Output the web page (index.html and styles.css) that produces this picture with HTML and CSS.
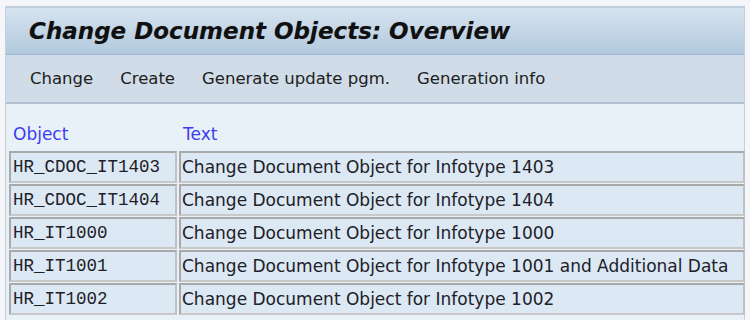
FILE: index.html
```html
<!DOCTYPE html>
<html>
<head>
<meta charset="utf-8">
<link rel="stylesheet" href="styles.css">
</head>
<body>
<div class="screen">
  <div class="title-bar"><h1 class="title">Change Document Objects: Overview</h1></div>
  <div class="toolbar">
    <span class="tool">Change</span>
    <span class="tool">Create</span>
    <span class="tool">Generate update pgm.</span>
    <span class="tool">Generation info</span>
  </div>
  <div class="content">
    <div class="grid">
      <div class="head">Object</div><div class="head">Text</div>
      <div class="cell obj">HR_CDOC_IT1403</div><div class="cell txt">Change Document Object for Infotype 1403</div>
      <div class="cell obj">HR_CDOC_IT1404</div><div class="cell txt">Change Document Object for Infotype 1404</div>
      <div class="cell obj">HR_IT1000</div><div class="cell txt">Change Document Object for Infotype 1000</div>
      <div class="cell obj">HR_IT1001</div><div class="cell txt">Change Document Object for Infotype 1001 and Additional Data</div>
      <div class="cell obj">HR_IT1002</div><div class="cell txt">Change Document Object for Infotype 1002</div>
    </div>
  </div>
</div>
</body>
</html>
```
FILE: styles.css
```css
html, body { margin: 0; padding: 0; }
body {
  width: 750px; height: 320px; overflow: hidden;
  background: #f4f6f9;
  font-family: "DejaVu Sans", sans-serif;
}
.screen {
  margin: 6px 5px 0 5px;
  border-left: 1px solid #c3cfdb;
  border-right: 1px solid #c3cfdb;
  height: 314px;
  display: flex; flex-direction: column;
}
.title-bar {
  height: 46px;
  border-top: 2px solid #bfcfde;
  border-bottom: 1px solid #9fb8cf;
  background: linear-gradient(#d6e3ef, #b2c9de);
  display: flex; align-items: center;
  padding-left: 23px;
}
.title {
  margin: 0;
  font-family: "DejaVu Sans", sans-serif;
  font-weight: bold; font-style: italic;
  font-size: 23px;
  color: #101010;
  text-shadow: 0 0 1px rgba(0,0,0,0.2);
}
.toolbar {
  height: 47px;
  background: #d0dde8;
  border-bottom: 2px solid #b2c2d2;
  display: flex; align-items: center;
  padding-left: 24px; gap: 27px;
  font-size: 16.5px; color: #202020;
  font-family: "DejaVu Sans", sans-serif;
}
.content {
  flex: 1;
  background: #e8f0f8;
  padding: 20px 0 0 3px;
}
.grid {
  display: grid;
  grid-template-columns: 168px 1fr;
  column-gap: 2px;
  row-gap: 1px;
  margin-right: -1px;
}
.head {
  color: #3d3df0;
  font-size: 17px;
  height: 26px;
  padding-left: 4px;
}
.cell {
  height: 28px;
  background: #dce8f3;
  border: 2px solid #a9a9a9;
  border-bottom-color: #c8c8c8;
  border-right-color: #c0c0c0;
  display: flex; align-items: center;
  color: #202028;
  white-space: nowrap; overflow: hidden;
}
.obj {
  font-family: "Liberation Mono", monospace;
  font-size: 17.5px;
  padding-left: 2px;
}
.txt {
  font-size: 17px;
  padding-left: 1px;
}
```
